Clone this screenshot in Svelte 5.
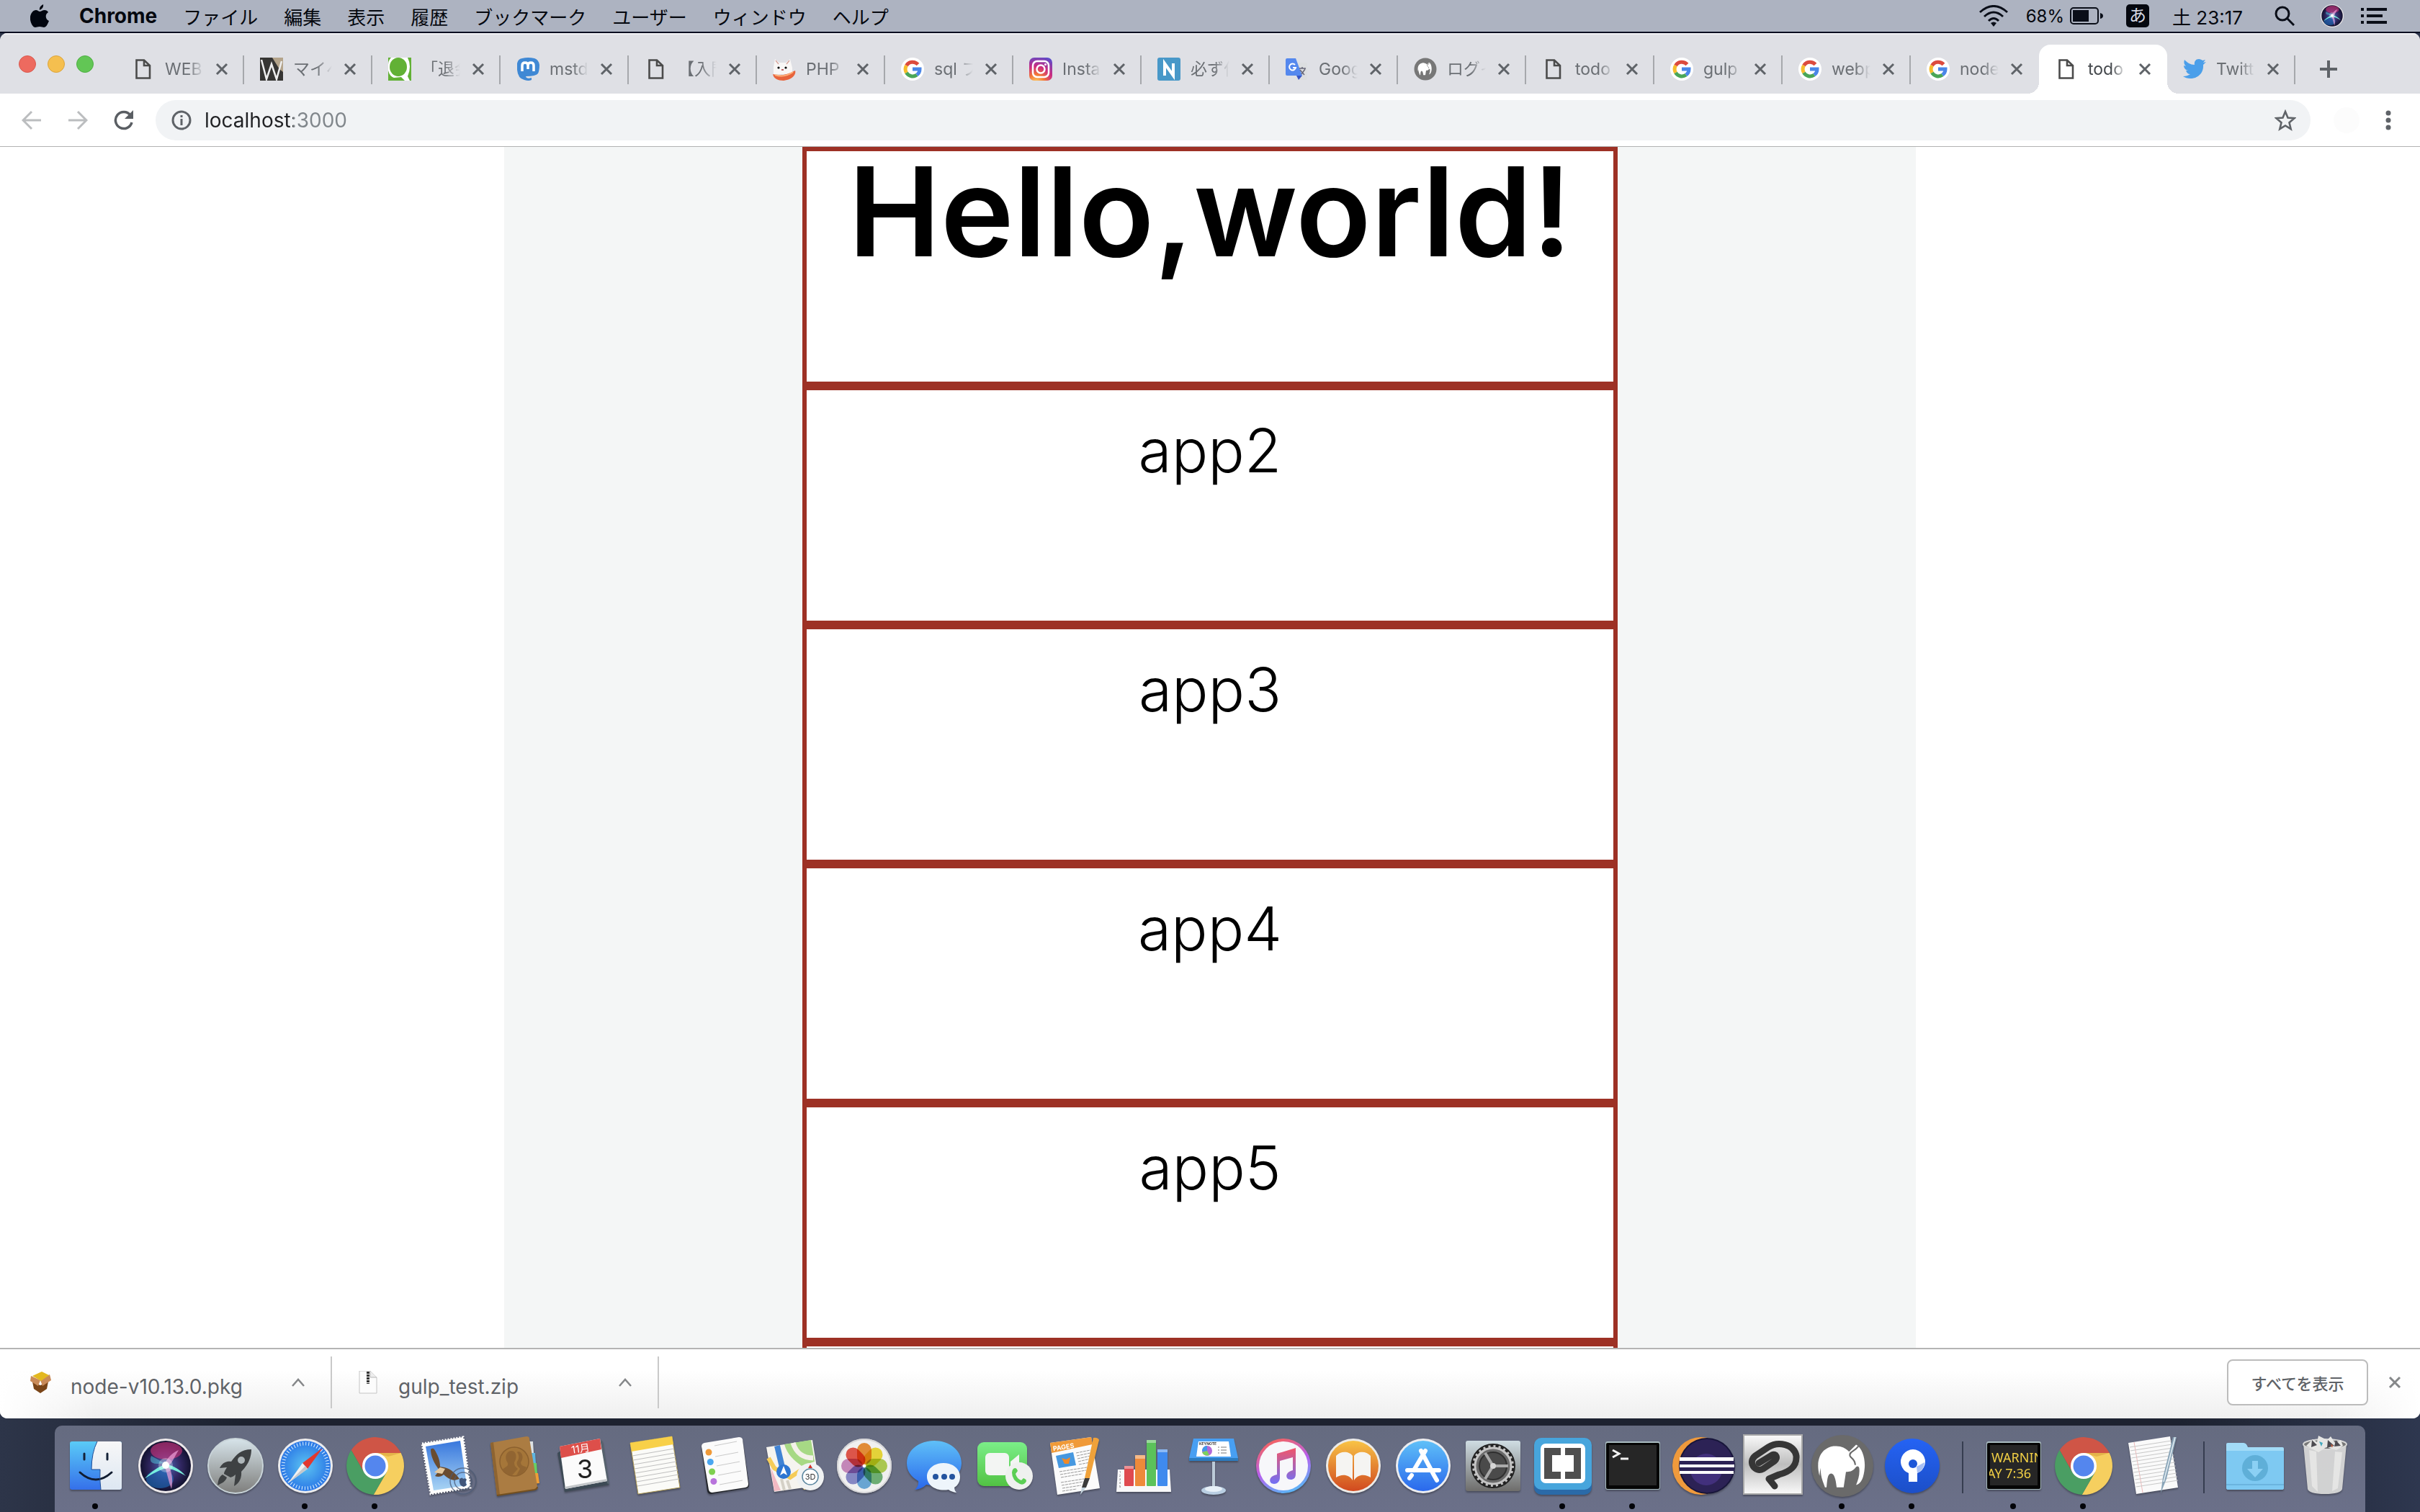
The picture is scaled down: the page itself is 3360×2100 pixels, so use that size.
<script>
  const menus = ['ファイル', '編集', '表示', '履歴', 'ブックマーク', 'ユーザー', 'ウィンドウ', 'ヘルプ'];
  const tabs = [
    { icon: 'doc', title: 'WEB' },
    { icon: 'w', title: 'マイペ' },
    { icon: 'qiita', title: '「退会' },
    { icon: 'mastodon', title: 'mstdn' },
    { icon: 'doc', title: '【入門' },
    { icon: 'cat', title: 'PHP' },
    { icon: 'google', title: 'sql フ' },
    { icon: 'instagram', title: 'Insta' },
    { icon: 'n', title: '必ず作' },
    { icon: 'translate', title: 'Goog' },
    { icon: 'mamp', title: 'ログイ' },
    { icon: 'doc', title: 'todo' },
    { icon: 'google', title: 'gulp' },
    { icon: 'google', title: 'webp' },
    { icon: 'google', title: 'node' },
    { icon: 'doc', title: 'todo', active: true },
    { icon: 'twitter', title: 'Twitt' }
  ];
  const apps = ['app2', 'app3', 'app4', 'app5', 'app6'];
  const downloads = [
    { icon: 'pkg', name: 'node-v10.13.0.pkg' },
    { icon: 'zip', name: 'gulp_test.zip' }
  ];
  const dock = [
    ['finder', true], ['siri'], ['launchpad'], ['safari', true], ['chrome', true], ['mail'], ['contacts'],
    ['calendar'], ['notes'], ['reminders'], ['maps'], ['photos'], ['messages'], ['facetime'], ['pages'],
    ['numbers'], ['keynote'], ['itunes'], ['books'], ['appstore'], ['preferences'], ['brackets', true],
    ['terminal', true], ['eclipse'], ['clip'], ['mamp', true], ['sourcetree', true], ['-'],
    ['console', true], ['chrome', true], ['textedit'], ['-'], ['downloads'], ['trash']
  ];
  const petals = ['#f0953a', '#f2e03c', '#b5d455', '#74b87a', '#6fb0e0', '#8d8fd0', '#cf8fc4', '#ea5a4e'];
  const range = (n) => Array.from({ length: n }, (_, i) => i);
  let url = $state('localhost:3000');
</script>

{#snippet cross()}
  <svg class="cross" viewBox="0 0 18 18" aria-hidden="true"><path d="M2 2 16 16M16 2 2 16" fill="none" stroke="currentColor" stroke-width="3" /></svg>
{/snippet}

{#snippet elephant()}
  <path d="M16 58C11 40 16 23 34 20c9-1 15 2 20 7l9-9c8 4 12 18 11 30-1 12-4 20-11 22 3-7 5-14 4-22-1-3-3-3-5 0-4 5-8 5-12 5l-3 20h-9c-1-10-3-18-7-18-5 0-5 9-6 18H23c-2-6-4-10-5-16l-1-9-1 10z" fill="#fff" />
  <path d="M66 20c-5 7-12 7-11 12 1 4 6 3 7 12" fill="none" stroke="#6a6a6a" stroke-width="2" />
{/snippet}

{#snippet favicon(name)}
  <svg class="fav" viewBox="0 0 32 32" aria-hidden="true">
    {#if name === 'doc'}
      <path d="M6.500 3.500H17L25 11V28.500H6.500ZM17 3.500V11H25" fill="none" stroke="#4b4b4b" stroke-width="2.600" />
    {:else if name === 'w'}
      <path d="M0 0h32v32H0z" fill="#363533" /><path d="M17 0h15v20l-5-4z" fill="#b4a48b" />
      <path d="M2 3 9 30 16 9 23 30 30 5" fill="none" stroke="#eee" stroke-width="2.500" />
    {:else if name === 'qiita'}
      <path d="M0 0h32v32H0z" fill="#fff" /><path d="M0 0h4Q0 4 0 10zM0 18q2 8 8 10l10-1 5 5H0zM27 0h5v32h-2l-3-6q6-14 0-26z" fill="#62b135" /><ellipse cx="14" cy="13" rx="12" ry="13" fill="#62b135" />
    {:else if name === 'mastodon'}
      <path d="M8 1Q16-1 25 1q6 2 7 9 0 8-2 12-3 4-17 4 1 4 8 2v3q-4 2-10 0Q2 29 1 17V8q1-6 7-7z" fill="#3f88d4" />
      <path d="M8 19V11q0-4 4-4t4 4v5-5q0-4 4-4t4 4v8" fill="none" stroke="#fff" stroke-width="3.500" />
    {:else if name === 'cat'}
      <path d="M3 2l6 5h9l6-5 3 12v9H1V13z" fill="#f9f7f6" /><path d="M4 4l4 5M23 4l-4 5" stroke="#d8a7a0" stroke-width="1.500" />
      <circle cx="8" cy="14" r="1.600" /><circle cx="18" cy="14" r="1.600" /><path d="M12 17h3" stroke="#a33" stroke-width="1.500" />
      <path d="M0 23c10 3 20 1 31-5 2 6-5 13-16 14C7 32 1 29 0 23z" fill="#e8643c" /><path d="M3 24c9 3 18 1 25-4" fill="none" stroke="#ffb27c" stroke-width="2" />
    {:else if name === 'google'}
      <circle cx="16" cy="16" r="16" fill="#fff" />
      <g fill="none" stroke-width="5"><path d="M23.500 9.500A10 10 0 0 0 7.500 11" stroke="#dc4b3e" /><path d="M7.500 11A10 10 0 0 0 7.500 21" stroke="#f6bd2c" /><path d="M7.500 21A10 10 0 0 0 22 24" stroke="#4aa657" /><path d="M22 24A10 10 0 0 0 26 16H16" stroke="#4a86e8" /></g>
    {:else if name === 'instagram'}
      <defs><radialGradient id="insta" cx=".3" cy="1.100" r="1.200"><stop offset="0" stop-color="#ffd76a" /><stop offset=".3" stop-color="#f47a35" /><stop offset=".6" stop-color="#cc2c80" /><stop offset="1" stop-color="#5a4ccc" /></radialGradient></defs>
      <rect width="32" height="32" rx="7" fill="url(#insta)" /><rect x="5" y="5" width="22" height="22" rx="6" fill="none" stroke="#fff" stroke-width="2.500" /><circle cx="16" cy="16" r="5.500" fill="none" stroke="#fff" stroke-width="2.500" /><circle cx="22.500" cy="9.500" r="1.500" fill="#fff" />
    {:else if name === 'n'}
      <rect width="32" height="32" rx="3" fill="#4898c8" /><path d="M10 25V8l12 17V8" fill="none" stroke="#fff" stroke-width="4" />
    {:else if name === 'translate'}
      <path d="M15 7h13q2 0 2 2v20q0 2-2 2H18z" fill="#dcdee0" /><path d="M15 25h8l-5 6z" fill="#3755c5" /><path d="M2 1h12l9 24H2q-2 0-2-2V3q0-2 2-2z" fill="#5588ee" />
      <path d="M13 10a4.500 4.500 0 1 0 1 4h-4" fill="none" stroke="#fff" stroke-width="2" /><path d="M19 15h9M23 13v2M20 17l6 7M27 16l-5 7" fill="none" stroke="#667" stroke-width="1.500" />
    {:else if name === 'mamp'}
      <circle cx="16" cy="16" r="15.500" fill="#777" /><g transform="translate(1 1) scale(.32)">{@render elephant()}</g>
    {:else if name === 'twitter'}
      <path d="M0 26c4 0 7-1 10-3-3 0-5-2-6-5h3c-4-1-6-4-6-7l3 1C1 9 1 6 2 3c4 4 8 7 14 7-1-5 2-8 6-8 2 0 4 1 5 2l4-1-3 4 4-1-4 4C29 22 20 29 10 29c-4 0-7-1-10-3z" fill="#4b9fea" />
    {/if}
  </svg>
{/snippet}

{#snippet siriOrb()}
  <circle cx="48" cy="48" r="38" fill="#ece8ea" /><circle cx="48" cy="48" r="35" fill="url(#siriBg)" />
  <ellipse cx="49" cy="27" rx="22" ry="12" fill="#d2347c" opacity=".6" />
  <ellipse cx="40" cy="66" rx="19" ry="13" fill="#1e6fc0" opacity=".6" />
  <path d="M20 66 46 44l-18-10q-6 14 18 10z" fill="#57d8e8" opacity=".45" />
  <path d="M18 66C30 55 38 48 49 46c10 1 20 8 27 16-12-7-20-10-27-11-8 2-20 8-31 15z" fill="#7fffe6" opacity=".9" />
  <path d="M46 46c4-8 10-16 20-20-6 10-8 16-14 22 6 10 6 24 4 32-4-10-6-22-10-34z" fill="#f0a0d8" opacity=".7" />
  <circle cx="48" cy="47" r="5" fill="#fff" /><circle cx="48" cy="47" r="10" fill="#fff" opacity=".3" />
{/snippet}

{#snippet appIcon(name)}
  <svg class="app-icon" viewBox="0 0 96 96" aria-hidden="true">
    {#if name === 'finder'}
      <rect x="12" y="14" width="72" height="67" rx="3" fill="url(#finder)" />
      <path d="M50 14h31q3 0 3 3v61q0 3-3 3H55q-2-12-1-28H42q0-24 8-39z" fill="url(#paper)" />
      <path d="M32 31v8M64 31v8" stroke="#152238" stroke-width="3" stroke-linecap="round" /><path d="M26 57Q48 77 70 57" fill="none" stroke="#101c30" stroke-width="3" stroke-linecap="round" />
      <path d="M50 14Q42 30 42 53H54Q53 66 55 81" fill="none" stroke="#1c4c96" stroke-width="1" />
    {:else if name === 'siri'}
      {@render siriOrb()}
    {:else if name === 'launchpad'}
      <circle cx="48" cy="48" r="38" fill="url(#steelLight)" stroke="#c8d3d8" stroke-width="2" />
      <path d="M70 25c-14 0-21 7-28 17-8-1-13 3-16 9l10-1c-3 5-4 7-4 9l9 5c3-1 5-2 7-4l-2 16c6-3 11-10 10-20C66 46 70 36 70 25z" fill="#3e4143" /><circle cx="56" cy="40" r="5" fill="#aeb6b9" /><path d="M30 60c-5 3-6 8-7 15 6-3 11-5 13-11z" fill="#3e4143" />
    {:else if name === 'safari'}
      <circle cx="48" cy="48" r="38" fill="#ececee" /><circle cx="48" cy="48" r="35" fill="url(#safari)" />
      <circle cx="48" cy="48" r="31" fill="none" stroke="#dff1ff" stroke-width="5" stroke-dasharray="1 3.058" />
      <path d="M72 23 51 52 44 44z" fill="#e2382f" /><path d="M24 72 44 44 51 52z" fill="#f1f1f1" /><path d="M24 72 48 48 51 52z" fill="#c4c8cc" />
    {:else if name === 'chrome'}
      <path d="M14.600 26.100A40 40 0 0 1 83.700 30H48L32.400 57Z" fill="#cf5546" /><path d="M83.700 30A40 40 0 0 1 45.700 87.900L63.600 57 48 30Z" fill="#f6cf5f" /><path d="M45.700 87.900A40 40 0 0 1 14.600 26.100L32.400 57H63.600Z" fill="#4a9e63" />
      <path d="M48 30H83.700L66 35Z" fill="#d9a23c" opacity=".6" /><circle cx="48" cy="48" r="18" fill="#fff" /><circle cx="48" cy="48" r="14.500" fill="#5486ee" />
    {:else if name === 'mail'}
      <path d="M16 17 73 8 83 78 28 87Z" fill="#fdfdfd" stroke="#fdfdfd" stroke-width="3" stroke-dasharray="2 2" />
      <path d="M21 21 69 13 78 75 32 82Z" fill="url(#mailSky)" />
      <path d="M28 25c2-2 4-1 5 0 5 8 8 15 8 24l6 1c9 2 16 9 21 16l-7 2c-6-1-11-4-15-8-3 3-8 4-12 2l6-8c-6-8-12-18-12-29z" fill="#6a4c30" /><path d="M33 57l8-7 7 2-4 7z" fill="#e4c9a0" />
      <g fill="none" stroke="#4b5a74" stroke-width="1.500" opacity=".75"><circle cx="73" cy="69" r="18" /><circle cx="73" cy="69" r="12" /></g><path d="M68 66q4-3 5 0 3-2 5 1-3 4 0 7-4 6-9 0-2-4-1-8z" fill="#40557a" />
    {:else if name === 'contacts'}
      <path d="M66 14l7 0 1 16h-7z" fill="#dfe3e5" /><path d="M68 30h8l1 15h-8z" fill="#5fb6e0" /><path d="M70 44h8l1 14h-8z" fill="#68cf63" /><path d="M72 58h8l2 14-9 1z" fill="#ef9e36" />
      <path d="M14 16 64 7q4 0 4 3l11 66q0 4-4 5L23 89Z" fill="#ab7c42" /><path d="M14 16l4-1 9 73-4 1z" fill="#8e6431" /><path d="M23 89l52-8q4-1 4-4" fill="none" stroke="#74501f" stroke-width="2" />
      <circle cx="47" cy="42" r="20" fill="#a57639" stroke="#8b602e" stroke-width="1.500" /><path d="M30 53c5-4 9-4 8-9-6-8-1-17 5-17 6 0 9 8 4 16 0 6 3 7 5 9l-8 9q-9-1-14-8zM52 28c6 0 9 8 4 15 0 5 5 5 8 7-3 6-7 10-14 11l5-9c-4-4-5-6-4-10 3-4 3-9 0-13z" fill="#916532" />
    {:else if name === 'calendar'}
      <path d="M13 28l-3 2 10 54 62-10-3-6z" fill="#3d4a55" /><path d="M70 12l3 2 9 60-3-2z" fill="#56636e" /><path d="M13 21 69 10 79 69 21 80Z" fill="#fbfbfb" /><path d="M21 80l58-11v-3L20 77z" fill="#c3c6c9" /><path d="M13 21 69 10 71 25 15 37Z" fill="#dd4f4a" />
      <text x="42" y="29" transform="rotate(-8 42 24)" class="svg-text" font-size="14" fill="#fff">11月</text><text x="48" y="65" class="svg-text" font-size="36" fill="#222">3</text>
    {:else if name === 'notes'}
      <path d="M14 16 72 7 83 78 25 87Z" fill="#fbfbf8" stroke="#b19c55" stroke-width="1" /><path d="M14 16 72 7 74 18 16 28Z" fill="#f8d048" />
      {#each range(8) as i}<path d="M{17 + i} {34 + i * 6}L{75 + i} {24 + i * 6}" stroke="#bfbfbf" stroke-width="1" />{/each}
    {:else if name === 'reminders'}
      <path d="M20 17 68 9q4 0 5 3l9 62q0 4-4 5l-49 8q-4 0-5-4L16 22q0-4 4-5z" fill="#22252a" /><path d="M20 16 68 8q4 0 5 3l8 62q0 4-4 5l-46 7q-4 0-5-4L16 21q0-4 4-5z" fill="#fbfbfb" />
      {#each ['#f09a38', '#49a6f0', '#7fd050', '#b873dc'] as c, i}<circle cx={26 + i * 2.300} cy={29 + i * 13.500} r="4.500" fill={c} /><path d="M{35 + i * 2} {35 + i * 13}l32-6" stroke="#c9c9c9" stroke-width="1" />{/each}
      <path d="M34 20l31-6" stroke="#c9c9c9" stroke-width="1" />
    {:else if name === 'maps'}
      <path d="M9 22 73 12 83 75 20 84Z" fill="#f6f4ef" /><path d="M34 18 71 12l5 30-18 6C47 40 38 32 34 18z" fill="#a7d985" /><path d="M46 16c5 15 14 21 28 21" fill="none" stroke="#f4f1ea" stroke-width="7" /><path d="M12 37l8 14 22 13 12-8 10 24" fill="none" stroke="#f5cc58" stroke-width="6" /><path d="M15 50l14 32-9 1z" fill="#f3b9c3" /><path d="M24 20l8 34" stroke="#4083d4" stroke-width="8" /><path d="M38 68l4 12M30 66l4 16" stroke="#d4d0c6" stroke-width="4" />
      <circle cx="33" cy="56" r="10" fill="#2d76d2" /><path d="M33 48l5 13-5-3-5 3z" fill="#fff" />
      <circle cx="70" cy="63" r="19" fill="#f0f2f3" /><circle cx="70" cy="63" r="11" fill="#fff" stroke="#5c87a0" stroke-width="1.500" /><path d="M70 46l-3 5h6z" fill="#d33027" /><text x="70" y="67" class="svg-text" font-size="11" fill="#333">3D</text>
    {:else if name === 'photos'}
      <circle cx="48" cy="48" r="38" fill="#f0f0f0" /><circle cx="48" cy="48" r="37" fill="none" stroke="#d6d6d8" stroke-width="2" />
      {#each petals as c, i}<rect class="petal" x="38" y="16" width="20" height="30" rx="10" fill={c} transform="rotate({i * 45} 48 48)" />{/each}
      <circle cx="48" cy="48" r="2" fill="#fff" />
    {:else if name === 'messages'}
      <path d="M48 13c21 0 38 13 38 31S69 75 48 75q-6 0-11-1-6 6-16 7 6-5 5-12Q10 60 10 44c0-18 17-31 38-31z" fill="url(#blueBubble)" />
      <path d="M61 44c13 0 23 8 23 19 0 7-3 12-8 15q0 4 3 7-7-1-11-4c-17 3-30-6-30-18 0-11 10-19 23-19z" fill="#eef5fb" /><circle cx="50" cy="63" r="4" fill="#24549f" /><circle cx="62" cy="63" r="4" fill="#24549f" /><circle cx="73" cy="63" r="4" fill="#24549f" />
    {:else if name === 'facetime'}
      <rect x="11" y="15" width="69" height="61" rx="9" fill="url(#green)" /><rect x="22" y="30" width="33" height="31" rx="6" fill="#f3f5f3" /><path d="M57 42l12-10v24l-12-8z" fill="#f3f5f3" /><circle cx="69" cy="62" r="19" fill="#eff1ef" /><path d="M61 52q4-3 6 3l-3 4q2 7 8 9l3-3q6 2 3 6-3 4-8 2Q59 68 59 57q0-3 2-5z" fill="#5bcf54" />
    {:else if name === 'pages'}
      <path d="M15 16 72 8 84 79 25 88Z" fill="#fbfbfb" /><path d="M15 16 72 8 74 18 17 30Z" fill="#f09a38" /><text x="34" y="25" transform="rotate(-9 34 24)" class="svg-text bold" font-size="9" fill="#fff">PAGES</text>
      <path d="M23 34 47 29 51 47 27 51Z" fill="#4698e0" /><path d="M31 37l6 2 6-3-2 9h-6z" fill="#f08a28" /><g stroke="#9a9a9a" stroke-width="1" stroke-dasharray="4 1"><path d="M51 30l20-4M52 34l19-4M53 38l18-4M54 42l17-4M55 46l16-3M28 56l38-6M29 60l36-6M30 64l30-5M30 71l32-5M31 75l30-5M32 79l26-4M32 83l20-3" /></g>
      <path d="M75 9q6-1 8 3L70 65h-7z" fill="#f0a23a" /><path d="M63 65h7l-5 13h-6z" fill="#3b3b3b" /><path d="M59 78h6l-8 10z" fill="#c6d5df" />
    {:else if name === 'numbers'}
      <path d="M12 53h72l2 31H10z" fill="#f8f8fa" /><rect x="21" y="48" width="13" height="28" rx="1" fill="#df4a50" /><rect x="36" y="33" width="14" height="43" rx="1" fill="#ee8a3a" /><rect x="52" y="12" width="13" height="64" rx="1" fill="#5bc25a" /><rect x="67" y="25" width="14" height="51" rx="1" fill="#3f8aee" />
      <path d="M21 48h13v4H21zM36 33h14v5H36zM52 12h13v4H52zM67 25h14v4H67z" fill="#fff" opacity=".4" />
      <g fill="#555">{#each range(5) as i}<text x="15" y={58 + i * 5} class="svg-text" font-size="4">{i + 1}</text>{/each}</g>
    {:else if name === 'keynote'}
      <path d="M46 42h4v40h-4z" fill="#bccbd8" /><ellipse cx="48" cy="82" rx="17" ry="6" fill="#b9cee2" /><ellipse cx="48" cy="80" rx="12" ry="4" fill="#e7f0f8" />
      <path d="M20 10H76l6 27v4H14v-4z" fill="#489ff2" /><path d="M14 37h68v4H14z" fill="#2d7cc0" /><path d="M27 14h42l3 21H24z" fill="#fff" /><text x="40" y="19" class="svg-text bold" font-size="5" fill="#333">KEYNOTE</text><circle cx="39" cy="27" r="7" fill="#b269d8" /><path d="M39 27v-7a7 7 0 0 0-7 8z" fill="#4098e8" /><path d="M39 27l-7 2q3 6 10 4z" fill="#7bd35c" /><path d="M54 22h12M54 26h12M54 30h12" stroke="#bbb" stroke-width="2" stroke-dasharray="2 2 9" />
    {:else if name === 'itunes'}
      <circle cx="48" cy="48" r="38" fill="url(#tunesRing)" /><circle cx="48" cy="48" r="34" fill="#f7f7fa" />
      <path d="M39 31 65 23V59c0 6-3 8-7 8-5 0-7-4-5-8 2-3 5-4 8-5V36l-18 5V64c0 6-4 9-8 9-5 0-7-4-5-8 2-3 5-4 9-5z" fill="url(#tunesNote)" />
    {:else if name === 'books'}
      <circle cx="48" cy="48" r="38" fill="#ecebe8" /><circle cx="48" cy="48" r="35" fill="url(#orange)" /><path d="M47 34c-4-6-16-8-23 0v30c7-5 18-5 23 4zM49 34c4-6 16-8 23 0v30c-7-5-18-5-23 4z" fill="#f5f4f2" />
    {:else if name === 'appstore'}
      <circle cx="48" cy="48" r="38" fill="#ecedf0" /><circle cx="48" cy="48" r="35" fill="url(#blueBubble)" /><path d="M45 27 63 61l4 7M51 27 35 54M26 54H70M32 61l-3 4" fill="none" stroke="#fff" stroke-width="6" stroke-linecap="round" />
    {:else if name === 'preferences'}
      <rect x="10" y="13" width="76" height="70" rx="3" fill="url(#steel)" /><circle cx="48" cy="48" r="31" fill="#222" /><circle cx="48" cy="48" r="25" fill="#6a6a6a" stroke="#c4c4c4" stroke-width="3" /><circle cx="48" cy="48" r="27" fill="none" stroke="#c4c4c4" stroke-width="4" stroke-dasharray="3 4.070" /><circle cx="48" cy="48" r="19" fill="#4a4a4a" stroke="#2f2f2f" stroke-width="2" /><path d="M48 48 37 30M48 48 37 66M48 48H69" stroke="#aaa" stroke-width="4" /><circle cx="48" cy="48" r="4" fill="#d5d5d5" />
    {:else if name === 'brackets'}
      <rect x="8" y="12" width="80" height="76" rx="10" fill="#2a6aa8" /><rect x="8" y="9" width="80" height="72" rx="10" fill="#47a5dc" /><rect x="17" y="17" width="62" height="55" rx="7" fill="#fff" /><path d="M22 23H45V33H33V56H45V66H22ZM51 23H73V66H51V56H63V33H51Z" fill="#4f4f4f" />
    {:else if name === 'terminal' || name === 'console'}
      <rect x="10" y="14" width="76" height="67" rx="3" fill="#a9bcc0" /><rect x="11" y="16" width="74" height="64" rx="2" fill="#050505" /><rect x="15" y="19" width="66" height="56" fill="#262626" />
      {#if name === 'terminal'}
        <path d="M20 26l9 5-9 5M31 38h11" fill="none" stroke="#f2f2f2" stroke-width="3" />
      {:else}
        <svg x="14" y="19" width="67" height="56"><g fill="#f1cf45" font-size="18"><text x="3" y="24" class="svg-text warn">WARNIN</text><text x="-3" y="46" class="svg-text warn">AY 7:36</text></g></svg>
      {/if}
    {:else if name === 'eclipse'}
      <circle cx="46" cy="48" r="40" fill="#ef9a3c" /><circle cx="54" cy="48" r="39" fill="#17153a" /><circle cx="54" cy="48" r="37" fill="#2c2255" /><circle cx="53" cy="53" r="22" fill="#42307c" /><path d="M16 36h75v5H16zM16 46h76v4H16zM16 55h75v4H16z" fill="#fff" /><path d="M16 41h76v5H16zM16 50h76v5H16z" fill="#2c2255" />
    {:else if name === 'clip'}
      <rect x="8" y="5" width="81" height="82" fill="url(#clipBg)" stroke="#a9a9a9" stroke-width="2" /><path d="M29 44 47 33c6-3 9 4 4 8L35 52c-11 6-22-9-11-18L42 22c14-9 36-4 39 12 1 15-9 22-24 26l-14 6 8 10" fill="none" stroke="#363636" stroke-width="9" stroke-linecap="round" stroke-linejoin="round" />
    {:else if name === 'mamp'}
      <circle cx="48" cy="48" r="43" fill="#6a6a6a" /><g transform="translate(-1 -1) scale(1.080)">{@render elephant()}</g>
    {:else if name === 'sourcetree'}
      <circle cx="48" cy="48" r="38" fill="url(#treeBg)" /><path d="M43 70V58a17 17 0 1 1 12 0V70z" fill="#fff" /><path d="M55 58a17 17 0 0 0 10-15l-11 6z" fill="#a8c0f4" /><circle cx="49" cy="45" r="6" fill="#1d57d8" />
    {:else if name === 'textedit'}
      <path d="M13 16 71 7 82 78 24 87Z" fill="#fafafa" /><path d="M21 15l12 70" stroke="#efb9b9" />{#each range(12) as i}<path d="M{15 + i * 0.800} {22 + i * 5}l58-9" stroke="#c8c8c8" />{/each}
      <path d="M75 8h5L66 66l-8 20 3-22z" fill="#8aa5b8" /><path d="M78 8 62 70" stroke="#e4edf3" stroke-width="1.500" />
    {:else if name === 'downloads'}
      <path d="M8 18q0-2 2-2h22q4 0 6 6H86q2 0 2 2v54q0 3-3 3H11q-3 0-3-3z" fill="#a2dbf7" /><path d="M8 27h80v51q0 3-3 3H11q-3 0-3-3z" fill="#7ec9f2" /><path d="M8 74h80" stroke="#6bb4df" stroke-width="2" /><circle cx="48" cy="51" r="18" fill="#5fafd8" /><path d="M44 41h8v11h7L48 64 37 52h7z" fill="#8bd0f4" />
    {:else if name === 'trash'}
      <path d="M18 17H78L72 80q-2 7-24 7t-24-7z" fill="#dcdcda" opacity=".93" /><path d="M26 26l4 50 8 8-2-56zM62 28l-4 55 8-4 6-50z" fill="#f7f7f6" opacity=".5" /><ellipse cx="48" cy="18" rx="30" ry="7" fill="#777" stroke="#d7d7d7" stroke-width="2" />
      <path d="M22 20l9-9 6 4 2-9 12 6 5-5 6 9 8-4 3 8-9 6-14-4-11 7z" fill="#e6e6e4" /><path d="M30 12l7 7-8 3zM52 12l9 8-10 3zM63 12l7 8-9 1z" fill="#4d4b50" /><path d="M40 14l5 2-2 5z" fill="#43a8bd" /><path d="M56 18l3 1-1 4z" fill="#cc6340" />
    {/if}
  </svg>
{/snippet}

<svg class="defs" aria-hidden="true">
  <defs>
    <linearGradient id="finder" x2="0" y2="1"><stop stop-color="#5acbf7" /><stop offset="1" stop-color="#3570ea" /></linearGradient>
    <linearGradient id="paper" x2="0" y2="1"><stop stop-color="#f7f7f8" /><stop offset="1" stop-color="#dde7f2" /></linearGradient>
    <radialGradient id="siriBg"><stop stop-color="#4e68b8" /><stop offset=".6" stop-color="#312762" /><stop offset="1" stop-color="#12122f" /></radialGradient>
    <linearGradient id="steelLight" x2="0" y2="1"><stop stop-color="#d7e4ea" /><stop offset="1" stop-color="#7e7e7c" /></linearGradient>
    <linearGradient id="steel" x2="0" y2="1"><stop stop-color="#cfdde3" /><stop offset="1" stop-color="#6e6d6b" /></linearGradient>
    <radialGradient id="safari"><stop stop-color="#5cc4f2" /><stop offset="1" stop-color="#2a77e6" /></radialGradient>
    <linearGradient id="mailSky" x2="0" y2="1"><stop stop-color="#3877dd" /><stop offset="1" stop-color="#a8d4f4" /></linearGradient>
    <linearGradient id="blueBubble" x2="0" y2="1"><stop stop-color="#5fc0f8" /><stop offset="1" stop-color="#2a68ec" /></linearGradient>
    <linearGradient id="green" x2="0" y2="1"><stop stop-color="#7bee88" /><stop offset="1" stop-color="#52c344" /></linearGradient>
    <linearGradient id="tunesRing" x1=".3" x2=".7" y2="1"><stop stop-color="#f8635a" /><stop offset=".5" stop-color="#b660ee" /><stop offset="1" stop-color="#53bdf8" /></linearGradient>
    <linearGradient id="tunesNote" x2="0" y2="1"><stop stop-color="#f1566a" /><stop offset="1" stop-color="#7170f6" /></linearGradient>
    <linearGradient id="orange" x2="0" y2="1"><stop stop-color="#f8c346" /><stop offset="1" stop-color="#d1491f" /></linearGradient>
    <linearGradient id="clipBg" x2="0" y2="1"><stop stop-color="#fafafa" /><stop offset=".5" stop-color="#bdbdbd" /><stop offset="1" stop-color="#fafafa" /></linearGradient>
    <linearGradient id="treeBg" x2="0" y2="1"><stop stop-color="#2563f4" /><stop offset="1" stop-color="#1c4fc8" /></linearGradient>
  </defs>
</svg>

<div class="desktop">
  <header class="menubar">
    <nav class="menus">
      <button class="apple" aria-label="Apple">
        <svg viewBox="0 0 26 32" aria-hidden="true"><path d="M18 0q1 5-5 8Q12 3 18 0zM13 10c2 0 4-2 7-2 2 0 4 1 5 3-5 3-4 10 1 12-2 5-4 9-7 9-2 0-3-1-6-1s-4 1-6 1c-4 0-8-9-7-15 1-5 4-9 8-9 2 0 4 2 5 2z" fill="#020610" /></svg>
      </button>
      <button class="current">Chrome</button>
      {#each menus as menu}<button>{menu}</button>{/each}
    </nav>
    <div class="status">
      <svg class="wifi" viewBox="0 0 42 30" aria-hidden="true"><g fill="none" stroke="#0a0e18" stroke-width="3"><path d="M2 10Q21-7 40 10M8 16Q21 4 34 16M14 22Q21 15 28 22" /></g><path d="M17 25q4-3 8 0l-4 5z" fill="#0a0e18" /></svg>
      <span class="battery">68%
        <svg viewBox="0 0 46 24" aria-hidden="true"><rect x="1" y="1" width="38" height="22" rx="4" fill="none" stroke="#0a0e18" stroke-width="2" /><path d="M4 4h22v16H4z" fill="#0a0e18" /><path d="M42 8q4 1 4 4t-4 4z" fill="#0a0e18" /></svg>
      </span>
      <span class="ime">あ</span>
      <span class="clock">土 23:17</span>
      <button class="search" aria-label="Spotlight"><svg class="glass" viewBox="0 0 28 28" aria-hidden="true"><g fill="none" stroke="#0a0e18" stroke-width="3"><circle cx="11" cy="11" r="9" /><path d="M17 17 27 27" /></g></svg></button>
      <button class="siri-button" aria-label="Siri"><svg viewBox="10 10 76 76" aria-hidden="true">{@render siriOrb()}</svg></button>
      <button aria-label="通知センター"><svg class="list" viewBox="0 0 36 22" aria-hidden="true"><path d="M0 2h4M8 2h28M0 11h4M8 11h22M0 20h4M8 20h28" stroke="#0a0e18" stroke-width="4" /></svg></button>
    </div>
  </header>

  <section class="window">
    <div class="tabstrip">
      <div class="lights">
        <button class="red" aria-label="閉じる"></button><button class="yellow" aria-label="しまう"></button><button class="green" aria-label="拡大"></button>
      </div>
      <div class="tabs">
        {#each tabs as tab, i}
          <div class="tab" class:active={tab.active} class:before={tabs[i + 1]?.active}>
            {@render favicon(tab.icon)}
            <button class="title">{tab.title}</button>
            <button class="close" aria-label="タブを閉じる">{@render cross()}</button>
          </div>
        {/each}
      </div>
      <button class="new-tab" aria-label="新しいタブ"><svg viewBox="0 0 24 24" aria-hidden="true"><path d="M12 0v24M0 12h24" stroke="#5f6368" stroke-width="4" /></svg></button>
    </div>

    <div class="toolbar">
      <button aria-label="戻る"><svg class="nav" viewBox="0 0 28 28" aria-hidden="true"><path d="M14 2 2 14 14 26M2 14H27" fill="none" stroke="#bbbdbf" stroke-width="3" /></svg></button>
      <button aria-label="進む"><svg class="nav" viewBox="0 0 28 28" aria-hidden="true"><path d="M14 2 26 14 14 26M26 14H1" fill="none" stroke="#bbbdbf" stroke-width="3" /></svg></button>
      <button aria-label="再読み込み"><svg class="nav" viewBox="0 0 28 28" aria-hidden="true"><path d="M23 7A11.500 11.500 0 1 0 25 17" fill="none" stroke="#5a5e63" stroke-width="3.500" /><path d="M27 0v12H15z" fill="#5a5e63" /></svg></button>
      <label class="omnibox">
        <svg class="nav" viewBox="0 0 28 28" aria-hidden="true"><circle cx="14" cy="14" r="12" fill="none" stroke="#5f6368" stroke-width="3" /><path d="M14 7v3M14 12v9" stroke="#5f6368" stroke-width="3" /></svg>
        <input type="text" bind:value={url} aria-label="アドレス" />
        <svg class="star" viewBox="0 0 30 30" aria-hidden="true"><path d="M15 3l3.500 8.500 9 .7-7 6 2.200 9L15 22.500 7.300 27.200l2.200-9-7-6 9-.7z" fill="none" stroke="#5f6368" stroke-width="2.600" /></svg>
      </label>
      <span class="avatar"></span>
      <button class="more" aria-label="メニュー"><svg viewBox="0 0 8 28" aria-hidden="true"><g fill="#5f6368"><circle cx="4" cy="4" r="3.500" /><circle cx="4" cy="14" r="3.500" /><circle cx="4" cy="24" r="3.500" /></g></svg></button>
    </div>

    <main class="page">
      <div class="wrapper">
        <div class="boxes">
          <section class="box"><h1>Hello,world!</h1></section>
          {#each apps as app}<section class="box"><p>{app}</p></section>{/each}
        </div>
      </div>
    </main>

    <footer class="shelf">
      {#each downloads as item}
        <div class="download">
          {#if item.icon === 'pkg'}
            <svg class="file" viewBox="0 0 32 32" aria-hidden="true"><path d="M5 15l11 5 11-5-2 10-9 6-9-6z" fill="#7a4518" /><path d="M3 7l13 6-3 8L2 14zM29 5l2 8-12 8-3-8z" fill="#c98a58" /><path d="M5 7 18 1l10 5-11 8z" fill="#e3b820" /></svg>
          {:else}
            <svg class="file" viewBox="0 0 32 32" aria-hidden="true"><path d="M4 0h15l9 9v22H4z" fill="#fcfcfc" stroke="#c4c4c4" /><path d="M19 0v9h9" fill="#eee" stroke="#b5b5b5" /><path d="M16 1v17" stroke="#333" stroke-width="4" stroke-dasharray="3 1" /></svg>
          {/if}
          <a href="#{item.name}">{item.name}</a>
          <button aria-label="オプション"><svg class="caret" viewBox="0 0 18 12" aria-hidden="true"><path d="M1 11 9 2 17 11" fill="none" stroke="#858789" stroke-width="2.500" /></svg></button>
        </div>
      {/each}
      <button class="show-all">すべてを表示</button>
      <button class="shelf-close" aria-label="閉じる">{@render cross()}</button>
    </footer>
  </section>

  <nav class="dock">
    {#each dock as [name, running]}
      {#if name === '-'}
        <span class="divider"></span>
      {:else}
        <button class="slot" class:running aria-label={name}>{@render appIcon(name)}</button>
      {/if}
    {/each}
  </nav>
</div>

<style>
  :global(body) { margin: 0; }
  * { box-sizing: border-box; }
  button {
    display: flex;
    align-items: center;
    justify-content: center;
    margin: 0;
    padding: 0;
    border: 0;
    background: none;
    color: inherit;
    font: inherit;
    white-space: nowrap;
  }
  svg { display: block; flex: none; }
  .defs { position: absolute; width: 0; height: 0; }
  .desktop {
    display: flex;
    flex-direction: column;
    height: 100vh;
    overflow: hidden;
    background: linear-gradient(90deg, #2d3549, #1d2230 10%, #1d2230 90%, #2e374f);
    font-family: Inter, 'Noto Sans CJK JP', sans-serif;
  }

  .menubar {
    display: flex;
    flex: none;
    align-items: center;
    justify-content: space-between;
    height: 44px;
    padding: 0 46px 0 42px;
    background: #adb3c1;
    box-shadow: 0 2px #060d20;
    color: #05080f;
    font-size: 26px;
  }
  .menus { display: flex; align-items: center; gap: 36px; }
  .apple { width: 26px; margin-right: 6px; }
  .apple svg { width: 26px; height: 32px; }
  .current { font-size: 28px; font-weight: 700; }
  .status { display: flex; align-items: center; gap: 32px; }
  .wifi { width: 42px; height: 30px; }
  .battery { display: flex; align-items: center; gap: 8px; margin-left: -8px; font-size: 24px; }
  .battery svg { width: 46px; height: 24px; }
  .ime {
    width: 32px;
    height: 32px;
    border-radius: 5px;
    background: #05080f;
    color: #d5d9e2;
    font-size: 24px;
    line-height: 32px;
    text-align: center;
  }
  .clock { margin-right: 12px; }
  .search { margin-right: 4px; }
  .glass { width: 28px; height: 28px; }
  .siri-button { margin-right: -8px; }
  .siri-button svg { width: 32px; height: 32px; }
  .list { width: 36px; height: 22px; }

  .window {
    display: flex;
    flex: 1;
    flex-direction: column;
    min-height: 0;
    margin: 2px 0 10px;
    overflow: hidden;
    border-radius: 10px;
    background: #fff;
  }
  .tabstrip {
    display: flex;
    flex: none;
    align-items: flex-end;
    height: 84px;
    padding-left: 26px;
    border-top: 2px solid #f0f0f3;
    background: #dfe0e5;
  }
  .lights { display: flex; gap: 16px; height: 68px; padding-top: 15px; margin-right: 31px; }
  .lights button { width: 24px; height: 24px; border: 1px solid; border-radius: 50%; }
  .lights .red { border-color: #d9584e; background: #ed6a5f; }
  .lights .yellow { border-color: #dba43c; background: #f5bf4f; }
  .lights .green { border-color: #4daf42; background: #62c655; }
  .tabs { display: flex; }
  .tab {
    position: relative;
    display: flex;
    align-items: center;
    width: 178px;
    height: 68px;
    padding: 0 22px;
    color: #6b6f74;
  }
  .tab::after {
    position: absolute;
    top: 15px;
    right: 0;
    width: 2px;
    height: 40px;
    background: #a6a8ac;
    content: '';
  }
  .tab.active::after, .tab.before::after { display: none; }
  .tab.active { border-radius: 16px 16px 0 0; background: #fff; color: #45494d; }
  .tab.active::before {
    position: absolute;
    inset: 52px -16px 0;
    background:
      radial-gradient(circle at 0 0, transparent 16px, #fff 16px) left / 16px 16px no-repeat,
      radial-gradient(circle at 16px 0, transparent 16px, #fff 16px) right / 16px 16px no-repeat;
    content: '';
  }
  .fav { width: 32px; height: 32px; margin-right: 14px; }
  .title {
    display: block;
    width: 54px;
    margin-right: 16px;
    overflow: hidden;
    font-size: 23px;
    line-height: 36px;
    text-align: left;
    mask-image: linear-gradient(90deg, #000 60%, transparent);
  }
  .cross { width: 18px; height: 18px; }
  .close { color: #5f6368; }
  .new-tab { width: 92px; height: 68px; }
  .new-tab svg { width: 24px; height: 24px; }

  .toolbar {
    display: flex;
    flex: none;
    align-items: center;
    gap: 36px;
    height: 74px;
    padding: 0 40px 0 30px;
    border-bottom: 1px solid #b2b2b2;
    background: #fff;
  }
  .nav { width: 28px; height: 28px; }
  .omnibox {
    display: flex;
    flex: 1;
    align-items: center;
    gap: 18px;
    height: 56px;
    margin-left: -6px;
    margin-right: -4px;
    padding: 0 20px 0 22px;
    border-radius: 28px;
    background: #f1f3f5;
  }
  input {
    flex: 1;
    min-width: 0;
    padding: 0;
    border: 0;
    outline: 0;
    background: linear-gradient(90deg, #202124 123px, #80868b 123px);
    background-clip: text;
    color: transparent;
    font: inherit;
    font-size: 28px;
  }
  .star { width: 30px; height: 30px; }
  .avatar { width: 36px; height: 36px; border-radius: 50%; background: #fcfcfc; }
  .more svg { width: 8px; height: 28px; }

  .page { flex: 1; min-height: 0; overflow: hidden; background: #fff; }
  .wrapper { width: calc(100% * 7 / 12); min-height: 100%; margin: 0 auto; background: #f4f6f6; }
  .boxes { width: calc(100% * 4 / 7 + 12px); margin: 0 auto; background: #fff; color: #000; text-align: center; }
  .box { height: 332px; overflow: hidden; border: 6px solid #9d3125; }
  h1 { margin: 0; font-size: 172px; font-weight: 600; line-height: 166px; }
  p { margin: 34px 0 0; font-size: 84px; font-weight: 350; line-height: 100px; }

  .shelf {
    display: flex;
    flex: none;
    align-items: center;
    height: 98px;
    padding: 0 26px 4px 0;
    border-top: 2px solid #b4b4b4;
    background: linear-gradient(90deg, #fff, transparent 4%, transparent 96%, #fff), linear-gradient(#fff 30%, #efefef);
    color: #5f6368;
  }
  .download {
    display: flex;
    align-items: center;
    width: 454px;
    height: 72px;
    padding: 0 36px 0 34px;
    border-right: 2px solid #c9c9c9;
  }
  .download:first-child { width: 461px; padding-left: 40px; }
  .file { width: 32px; height: 32px; margin-right: 26px; }
  .download a { flex: 1; padding-top: 12px; color: inherit; font-size: 28px; text-decoration: none; }
  .caret { width: 18px; height: 12px; }
  .show-all {
    width: 196px;
    height: 64px;
    margin-right: 28px;
    margin-left: auto;
    border: 2px solid #bcbcbc;
    border-radius: 8px;
    background: #fff;
    font-size: 22px;
    font-weight: 500;
  }
  .shelf-close { color: #858789; }

  .dock {
    display: flex;
    flex: none;
    align-self: center;
    height: 120px;
    padding: 8px 8px 0;
    border-radius: 10px 10px 0 0;
    background: linear-gradient(#656b80, #6b7089);
  }
  .slot { position: relative; align-items: flex-start; width: 97px; height: 112px; }
  .app-icon { width: 96px; height: 96px; filter: drop-shadow(0 2px 1px rgb(0 0 0 / 30%)); }
  .running::after {
    position: absolute;
    top: 100px;
    left: 44px;
    width: 8px;
    height: 8px;
    border-radius: 50%;
    background: #020308;
    content: '';
  }
  .divider { width: 2px; height: 72px; margin: 14px 21px 0; background: #363d50; }
  .petal { mix-blend-mode: multiply; }
  .svg-text { font-family: Inter, 'Noto Sans CJK JP', sans-serif; text-anchor: middle; }
  .svg-text.bold { font-weight: 700; }
  .svg-text.warn { font-family: 'Noto Sans', sans-serif; text-anchor: start; }
</style>
